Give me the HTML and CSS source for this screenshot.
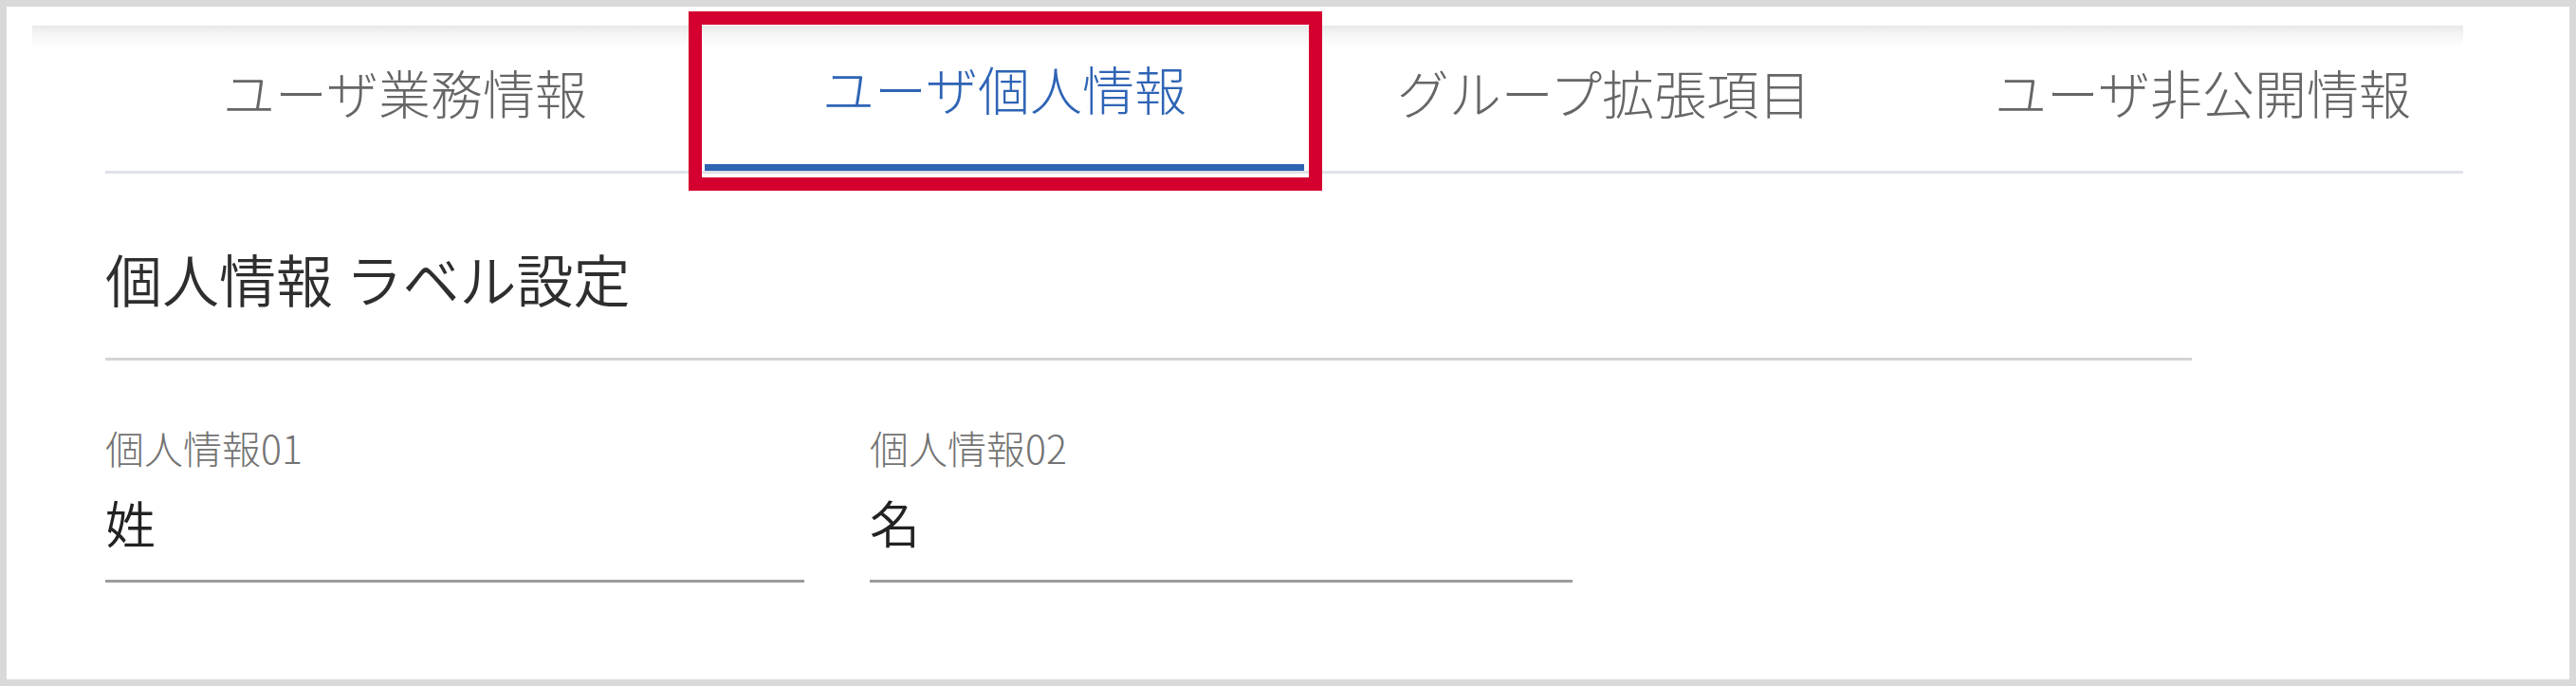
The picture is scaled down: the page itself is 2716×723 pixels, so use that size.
FILE: index.html
```html
<!DOCTYPE html>
<html lang="ja">
<head>
<meta charset="utf-8">
<title>ユーザ個人情報</title>
<link rel="stylesheet" href="styles.css">
</head>
<body>
<div class="panel">
  <div class="tab-header">
    <div class="tab-spacer"></div>
    <div class="tab-list">
      <div class="tab">ユーザ業務情報</div>
      <div class="tab tab-active">ユーザ個人情報<span class="highlight"></span></div>
      <div class="tab">グループ拡張項目</div>
      <div class="tab">ユーザ非公開情報</div>
    </div>
  </div>
  <div class="content">
    <h2 class="section-title">個人情報 ラベル設定</h2>
    <div class="fields">
      <div class="field field-1">
        <div class="field-label">個人情報01</div>
        <div class="field-value">姓</div>
      </div>
      <div class="field field-2">
        <div class="field-label">個人情報02</div>
        <div class="field-value">名</div>
      </div>
    </div>
  </div>
</div>
</body>
</html>
```
FILE: styles.css
```css
html, body {
  margin: 0;
  padding: 0;
}
body {
  background: #d9d9d9;
  padding: 7px;
  font-family: "Noto Sans CJK JP", "Noto Sans", sans-serif;
  font-weight: 300;
}
.panel {
  background: #ffffff;
  height: 709px;
  box-sizing: border-box;
  padding: 20px 0 0 27px;
  overflow: hidden;
}
.tab-header {
  width: 2563px;
  display: flex;
  background: linear-gradient(to bottom, #e9e9e9 0, #f6f6f6 10px, #ffffff 24px);
}
.tab-spacer {
  width: 77px;
  flex: none;
}
.tab-list {
  flex: 1;
  display: flex;
  border-bottom: 3px solid #dfe2e6;
}
.tab {
  flex: none;
  width: 632px;
  height: 153px;
  box-sizing: border-box;
  display: flex;
  align-items: center;
  justify-content: center;
  padding-bottom: 15px;
  font-size: 55px;
  line-height: 55px;
  color: #666666;
  white-space: nowrap;
  position: relative;
}
.tab:last-child {
  width: 590px;
  justify-content: flex-start;
  padding-left: 96px;
}
.tab-active {
  color: #2f64b5;
  border-bottom: 7px solid #2f64b3;
}
.highlight {
  position: absolute;
  left: -17px;
  top: -15px;
  right: -19px;
  bottom: -28px;
  border: 14px solid #d4002f;
}
.content {
  margin-left: 77px;
  padding-top: 80px;
}
.section-title {
  margin: 0;
  width: 2200px;
  font-size: 60px;
  line-height: 60px;
  font-weight: 350;
  color: #2e2e2e;
  padding-bottom: 54px;
  border-bottom: 3px solid #d4d4d4;
}
.fields {
  display: grid;
  grid-template-columns: 737px 741px;
  column-gap: 69px;
  padding-top: 71px;
}
.field {
  border-bottom: 3px solid #9c9c9c;
}
.field-label {
  font-size: 41px;
  line-height: 41px;
  color: #737373;
}
.field-value {
  margin-top: 32px;
  font-size: 53px;
  line-height: 53px;
  font-weight: 350;
  color: #222222;
  padding-bottom: 34px;
}
```
